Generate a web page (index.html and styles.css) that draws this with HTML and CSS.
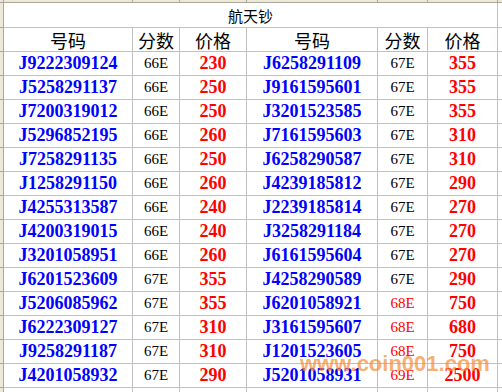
FILE: index.html
```html
<!DOCTYPE html>
<html lang="zh">
<head>
<meta charset="utf-8">
<title>航天钞</title>
<link rel="stylesheet" href="styles.css">
</head>
<body>
<div class="sheet">
  <div class="colheads">
    <div class="ch corner"></div>
    <div class="ch c1"></div>
    <div class="ch c2"></div>
    <div class="ch c3"></div>
    <div class="ch c4"></div>
    <div class="ch c5"></div>
    <div class="ch c6"></div>
    <div class="ch c7"></div>
  </div>
  <div class="main">
    <div class="rowheads">
      <div class="rh first"></div>
      <div class="rh"></div><div class="rh"></div><div class="rh"></div><div class="rh"></div>
      <div class="rh"></div><div class="rh"></div><div class="rh"></div><div class="rh"></div>
      <div class="rh"></div><div class="rh"></div><div class="rh"></div><div class="rh"></div>
      <div class="rh"></div><div class="rh"></div><div class="rh"></div><div class="rh"></div>
    </div>
    <div class="grid">
      <div class="cell title">航天钞</div><div class="cell"></div>

      <div class="cell hd">号码</div><div class="cell hd">分数</div><div class="cell hd">价格</div><div class="cell hd">号码</div><div class="cell hd">分数</div><div class="cell hd">价格</div><div class="cell"></div>

      <div class="cell no">J9222309124</div><div class="cell sc">66E</div><div class="cell pr">230</div><div class="cell no">J6258291109</div><div class="cell sc">67E</div><div class="cell pr">355</div><div class="cell"></div>
      <div class="cell no">J5258291137</div><div class="cell sc">66E</div><div class="cell pr">250</div><div class="cell no">J9161595601</div><div class="cell sc">67E</div><div class="cell pr">355</div><div class="cell"></div>
      <div class="cell no">J7200319012</div><div class="cell sc">66E</div><div class="cell pr">250</div><div class="cell no">J3201523585</div><div class="cell sc">67E</div><div class="cell pr">355</div><div class="cell"></div>
      <div class="cell no">J5296852195</div><div class="cell sc">66E</div><div class="cell pr">260</div><div class="cell no">J7161595603</div><div class="cell sc">67E</div><div class="cell pr">310</div><div class="cell"></div>
      <div class="cell no">J7258291135</div><div class="cell sc">66E</div><div class="cell pr">250</div><div class="cell no">J6258290587</div><div class="cell sc">67E</div><div class="cell pr">310</div><div class="cell"></div>
      <div class="cell no">J1258291150</div><div class="cell sc">66E</div><div class="cell pr">260</div><div class="cell no">J4239185812</div><div class="cell sc">67E</div><div class="cell pr">290</div><div class="cell"></div>
      <div class="cell no">J4255313587</div><div class="cell sc">66E</div><div class="cell pr">240</div><div class="cell no">J2239185814</div><div class="cell sc">67E</div><div class="cell pr">270</div><div class="cell"></div>
      <div class="cell no">J4200319015</div><div class="cell sc">66E</div><div class="cell pr">240</div><div class="cell no">J3258291184</div><div class="cell sc">67E</div><div class="cell pr">270</div><div class="cell"></div>
      <div class="cell no">J3201058951</div><div class="cell sc">66E</div><div class="cell pr">260</div><div class="cell no">J6161595604</div><div class="cell sc">67E</div><div class="cell pr">270</div><div class="cell"></div>
      <div class="cell no">J6201523609</div><div class="cell sc">67E</div><div class="cell pr">355</div><div class="cell no">J4258290589</div><div class="cell sc">67E</div><div class="cell pr">290</div><div class="cell"></div>
      <div class="cell no">J5206085962</div><div class="cell sc">67E</div><div class="cell pr">355</div><div class="cell no">J6201058921</div><div class="cell sc red">68E</div><div class="cell pr">750</div><div class="cell"></div>
      <div class="cell no">J6222309127</div><div class="cell sc">67E</div><div class="cell pr">310</div><div class="cell no">J3161595607</div><div class="cell sc red">68E</div><div class="cell pr">680</div><div class="cell"></div>
      <div class="cell no">J9258291187</div><div class="cell sc">67E</div><div class="cell pr">310</div><div class="cell no">J1201523605</div><div class="cell sc red">68E</div><div class="cell pr">750</div><div class="cell"></div>
      <div class="cell no">J4201058932</div><div class="cell sc">67E</div><div class="cell pr">290</div><div class="cell no">J5201058931</div><div class="cell sc red">69E</div><div class="cell pr">2500</div><div class="cell"></div>

      <div class="cell"></div><div class="cell"></div><div class="cell"></div><div class="cell"></div><div class="cell"></div><div class="cell"></div><div class="cell"></div>
    </div>
  </div>
  <div class="watermark">www.coin001.com</div>
</div>
</body>
</html>
```

FILE: styles.css
```css
html, body {
  margin: 0;
  padding: 0;
  background: #ffffff;
}

.sheet {
  position: relative;
  width: 502px;
  height: 392px;
  overflow: hidden;
  background: #ffffff;
}

.colheads {
  display: flex;
  height: 2px;
  background: #ece9d8;
  border-bottom: 1px solid #aca899;
}

.ch {
  flex: none;
  height: 2px;
  border-right: 1px solid #aca899;
  box-sizing: border-box;
}
.ch.corner { width: 4px; }
.ch.c1 { width: 129px; }
.ch.c2 { width: 47px; }
.ch.c3 { width: 67px; }
.ch.c4 { width: 131px; }
.ch.c5 { width: 50px; }
.ch.c6 { width: 70px; }
.ch.c7 { width: 10px; border-right: none; }

.main {
  display: flex;
  align-items: flex-start;
}

.rowheads {
  flex: none;
  width: 3px;
  border-right: 1px solid #aca899;
  background: #ece9d8;
  display: flex;
  flex-direction: column;
}

.rh {
  height: 23px;
  border-top: 1px solid #aca899;
}
.rh.first {
  height: 24px;
  border-top: none;
}

.grid {
  display: grid;
  grid-template-columns: 128px 46px 66px 130px 49px 69px 10px;
  grid-template-rows: 24px;
  grid-auto-rows: 23px;
  gap: 1px;
  background: #c0c0c0;
}

.cell {
  background: #ffffff;
  display: flex;
  align-items: center;
  justify-content: center;
  white-space: nowrap;
}

.title {
  grid-column: 1 / 7;
  font-family: "Noto Sans CJK SC", sans-serif;
  font-size: 15px;
  color: #000000;
}

.hd {
  font-family: "Noto Sans CJK SC", sans-serif;
  font-size: 18px;
  color: #000000;
  padding-top: 1px;
}

.no {
  font-family: "Liberation Serif", serif;
  font-weight: bold;
  font-size: 18px;
  color: #0000ff;
}

.sc {
  font-family: "Liberation Serif", serif;
  font-size: 15px;
  color: #000000;
}
.sc.red {
  color: #ff0000;
}

.pr {
  font-family: "Liberation Serif", serif;
  font-weight: bold;
  font-size: 18px;
  color: #ff0000;
}

.watermark {
  position: absolute;
  left: 300px;
  top: 351px;
  font-family: "Liberation Sans", sans-serif;
  font-weight: bold;
  font-size: 22px;
  color: rgba(245, 140, 50, 0.7);
  white-space: nowrap;
}
```
